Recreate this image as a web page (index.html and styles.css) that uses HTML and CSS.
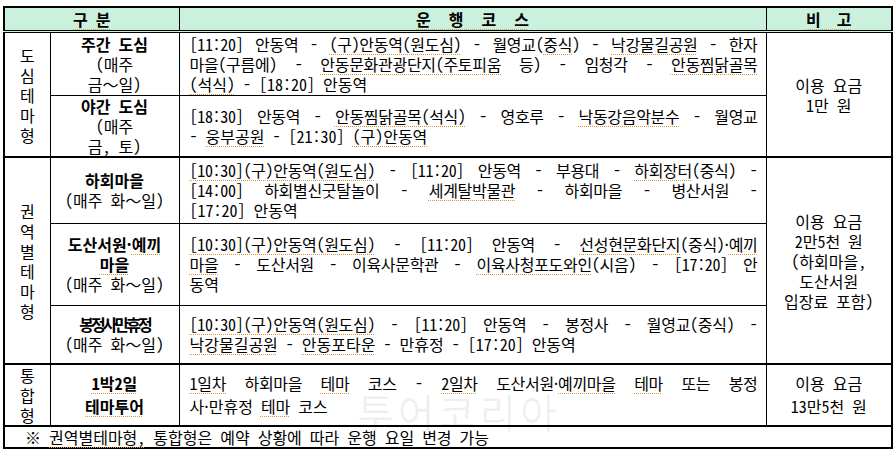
FILE: index.html
```html
<!DOCTYPE html>
<html lang="ko">
<head>
<meta charset="utf-8">
<title>안동 시티투어 운행 코스</title>
<link rel="stylesheet" href="styles.css">
</head>
<body>
<table class="course">
  <colgroup>
    <col class="c-type">
    <col class="c-name">
    <col class="c-route">
    <col class="c-note">
  </colgroup>
  <thead>
    <tr class="head">
      <th colspan="2"><span class="sp">구 분</span></th>
      <th><span class="sp wide">운 행 코 스</span></th>
      <th><span class="sp mid">비 고</span></th>
    </tr>
  </thead>
  <tbody>
    <tr class="r-day grp">
      <td rowspan="2" class="type">도<br>심<br>테<br>마<br>형</td>
      <td class="name"><b>주간 도심</b><br>(매주<br>금～일)</td>
      <td class="route">
        <span class="ln j">[11:20] 안동역 - <span class="sp">(구)안동역(원도심)</span> - 월영교(<span class="sp">중식</span>) - <span class="sp">낙강물길공원</span> - 한자</span>
        <span class="ln j">마을(구름에) - <span class="sp">안동문화관광단지(주토피움</span> 등) - 임청각 - <span class="sp">안동찜닭골목</span></span>
        <span class="ln"><span class="sp">(석식)</span> - [18:20] 안동역</span>
      </td>
      <td rowspan="2" class="note">이용 요금<br>1만 원</td>
    </tr>
    <tr class="r-night">
      <td class="name"><b>야간 도심</b><br>(매주<br>금, 토)</td>
      <td class="route">
        <span class="ln j">[18:30] 안동역 - <span class="sp">안동찜닭골목(석식)</span> - 영호루 - <span class="sp">낙동강음악분수</span> - 월영교</span>
        <span class="ln">- <span class="sp">웅부공원</span> - [21:30] <span class="sp">(구)안동역</span></span>
      </td>
    </tr>
    <tr class="r-hahoe grp">
      <td rowspan="3" class="type">권<br>역<br>별<br>테<br>마<br>형</td>
      <td class="name"><b>하회마을</b><br>(매주 화～일)</td>
      <td class="route">
        <span class="ln j"><span class="sp">[10:30](구)안동역(원도심)</span> - [11:20] 안동역 - 부용대 - <span class="sp">하회장터</span>(중식) -</span>
        <span class="ln j">[14:00] 하회별신굿탈놀이 - <span class="sp">세계탈박물관</span> - 하회마을 - 병산서원 -</span>
        <span class="ln">[17:20] 안동역</span>
      </td>
      <td rowspan="3" class="note">이용 요금<br>2만5천 원<br>(하회마을,<br>도산서원<br>입장료 포함)</td>
    </tr>
    <tr class="r-dosan">
      <td class="name"><b>도산서원·<span class="sp">예끼</span><br><span class="sp">마을</span></b><br>(매주 화～일)</td>
      <td class="route">
        <span class="ln j"><span class="sp">[10:30](구)안동역(원도심)</span> - [11:20] 안동역 - <span class="sp">선성현문화단지</span>(중식)·<span class="sp">예끼</span></span>
        <span class="ln j"><span class="sp">마을</span> - 도산서원 - 이육사문학관 - <span class="sp">이육사청포도와인</span>(시음) - [17:20] 안</span>
        <span class="ln">동역</span>
      </td>
    </tr>
    <tr class="r-bong">
      <td class="name"><b class="narrow">봉정사만휴정</b><br>(매주 화～일)</td>
      <td class="route">
        <span class="ln j"><span class="sp">[10:30](구)안동역(원도심)</span> - [11:20] 안동역 - 봉정사 - 월영교(중식) -</span>
        <span class="ln"><span class="sp">낙강물길공원</span> - <span class="sp">안동포타운</span> - 만휴정 - [17:20] 안동역</span>
      </td>
    </tr>
    <tr class="r-tour grp">
      <td class="type">통<br>합<br>형</td>
      <td class="name tall"><b><span class="sp">1박2일</span><br><span class="sp">테마투어</span></b></td>
      <td class="route tall">
        <span class="ln j"><span class="sp">1일차</span> 하회마을 <span class="sp">테마</span> 코스 - <span class="sp">2일차</span> 도산서원·<span class="sp">예끼마을</span> <span class="sp">테마</span> 또는 봉정</span>
        <span class="ln">사·만휴정 <span class="sp">테마</span> 코스</span>
      </td>
      <td class="note tall">이용 요금<br>13만5천 원</td>
    </tr>
    <tr class="foot grp">
      <td colspan="4">※ <span class="sp">권역별테마형,</span> 통합형은 예약 상황에 따라 운행 요일 변경 가능</td>
    </tr>
  </tbody>
</table>
<div class="watermark">투어코리아</div>
</body>
</html>
```

FILE: styles.css
```css
html, body {
  margin: 0;
  background: #fff;
}
body {
  position: relative;
  padding: 6px 3px 0 3px;
  font-family: "Noto Sans Mono CJK KR", "Noto Sans CJK KR", sans-serif;
  font-size: 16px;
  color: #000;
}
.course {
  border-collapse: collapse;
  table-layout: fixed;
  width: 888px;
  border: 2px solid #000;
}
.c-type { width: 46px; }
.c-name { width: 129px; }
.c-route { width: 587px; }
.c-note { width: 126px; }

.course th,
.course td {
  border: 1px solid #000;
  padding: 0;
  vertical-align: middle;
  line-height: 20px;
  text-align: center;
  font-weight: normal;
}
.course tr.grp > td {
  border-top: 2px solid #000;
}
.head th {
  height: 22px;
  background: #ccf0de;
  font-weight: bold;
  border-bottom: 3px double #000;
  line-height: 20px;
}
.wide { word-spacing: 10px; }
.mid { word-spacing: 8px; }

.r-day { height: 64px; }
.r-night { height: 61px; }
.r-hahoe { height: 66px; }
.r-dosan { height: 82px; }
.r-bong { height: 59px; }
.r-tour { height: 62px; }
.foot { height: 22px; }

.course td.route {
  text-align: left;
  padding: 0 8px 0 10px;
}
.ln { display: block; }
.j {
  text-align: justify;
  text-align-last: justify;
  letter-spacing: -0.3px;
}
.course td.tall { line-height: 23px; }
.course .foot td {
  text-align: left;
  padding-left: 20px;
}
.narrow { letter-spacing: -3px; }
.sp {
  text-decoration: underline dotted #d89a3c;
  text-decoration-thickness: 1px;
  text-underline-offset: 3px;
}
.watermark {
  position: absolute;
  left: 357px;
  top: 395px;
  font-family: "Noto Sans CJK KR", sans-serif;
  font-size: 40px;
  letter-spacing: 4px;
  line-height: 32px;
  height: 32px;
  color: rgba(0, 0, 0, 0.06);
  pointer-events: none;
  white-space: nowrap;
}
```
